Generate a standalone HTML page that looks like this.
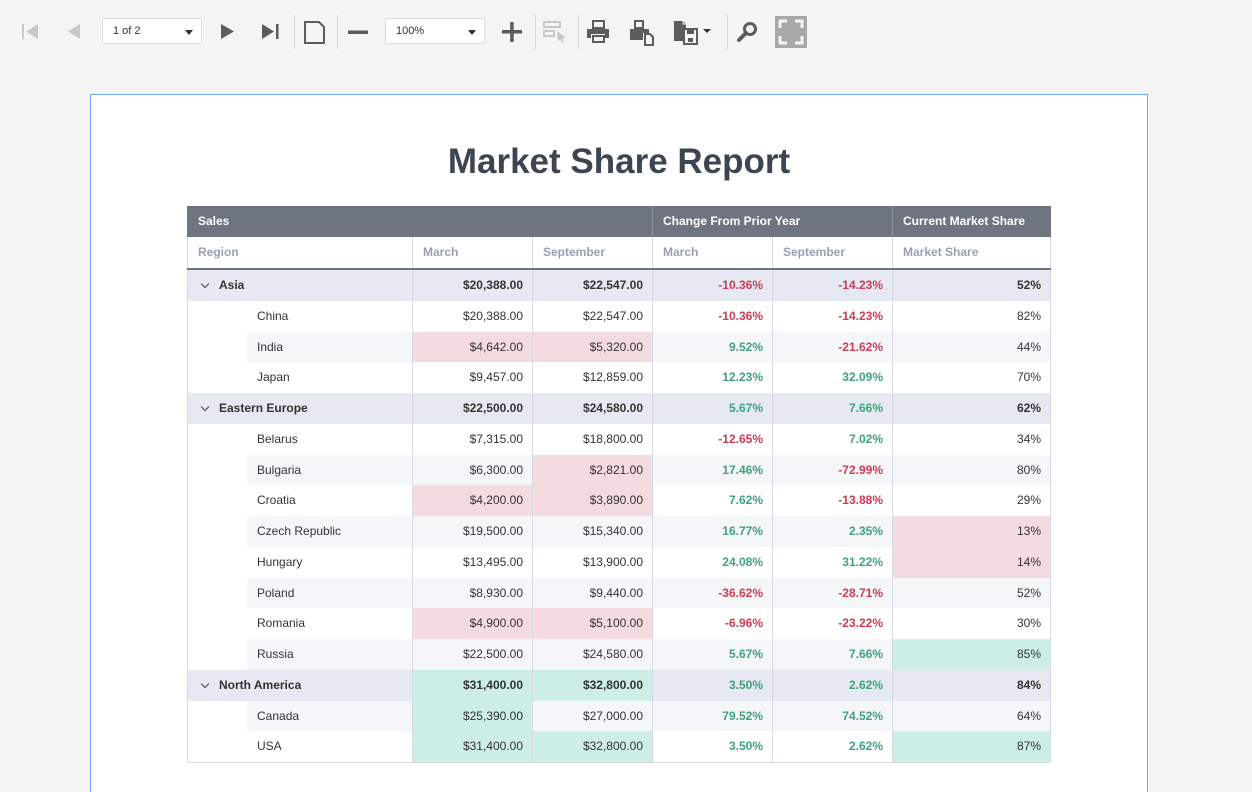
<!DOCTYPE html>
<html style="overflow:hidden"><head><meta charset="utf-8"><style>
body{margin:0;width:1252px;height:792px;background:#f4f4f4;font-family:"Liberation Sans",Arial,sans-serif;overflow:hidden;position:relative}
.ic{position:absolute}
.sel{position:absolute;top:18px;height:26px;background:#fff;border:1px solid #dcdcdc;border-radius:3px;box-sizing:border-box;font-size:11px;color:#333;line-height:24px;padding-left:10px}
.sel:after{content:"";position:absolute;right:8px;top:11px;border:4px solid transparent;border-top:5px solid #333}
.sep{position:absolute;top:15px;width:1px;height:34px;background:#dadada}
.page{position:absolute;left:90px;top:94px;width:1056px;height:710px;background:#fff;border:1px solid #6ea8f2}
h1{position:absolute;left:90px;width:1058px;top:142px;margin:0;text-align:center;font-size:35px;font-weight:bold;color:#3e4552}
.tbl{position:absolute;left:187px;top:206px;width:864px}
.r{display:flex;height:30.75px;font-size:12px;color:#333}
.c{box-sizing:border-box;border-left:1px solid #d6dae2;text-align:right;padding-right:9px;line-height:30.75px;white-space:nowrap}
.c:first-child{text-align:left}
.w0{width:225px}.w1{width:120px}.w2{width:120px}.w3{width:120px}.w4{width:120px}.w5{width:159px;border-right:1px solid #d6dae2}
.hd{height:31px;background:#6e7480;color:#fff;font-weight:bold}
.hd .c{border-left:1px solid #6e7480;line-height:31px;text-align:left;padding-left:10px}
.hd .c+.c{border-left:1px solid #8d929c}
.sh{height:31px;border-bottom:2px solid #6e7480;color:#98a0b2;font-weight:bold}
.sh .c{text-align:left;padding-left:10px;line-height:31px}
.g{background:#e6e9f1;font-weight:bold}
.g .c:first-child{padding-left:31px;position:relative}
.g .c:first-child:before{content:"";position:absolute;left:14px;top:11px;width:5px;height:5px;border-right:1.5px solid #444;border-bottom:1.5px solid #444;transform:rotate(45deg)}
.k .c:first-child{padding-left:69px;background:linear-gradient(90deg,#fff 59px,transparent 59px)}
.alt{background:#f5f6f8}
.p{background:#f4dbdf}.m{background:#cdeee5}
.rd{color:#d13a55;font-weight:bold}.gn{color:#3ea27f;font-weight:bold}
.last{border-bottom:1px solid #d6dae2}
</style></head><body>
<svg class="ic" style="left:20px;top:22px" width="22" height="20"><rect x="2" y="2" width="2" height="15" fill="#c8c8c8"/><path d="M18 2V17L6 9.5Z" fill="#c8c8c8"/></svg>
<svg class="ic" style="left:64px;top:22px" width="20" height="20"><path d="M16 2V17L4 9.5Z" fill="#c8c8c8"/></svg>
<div class="sel" style="left:102px;width:100px">1 of 2</div>
<svg class="ic" style="left:218px;top:22px" width="20" height="20"><path d="M3 2V17L16 9.5Z" fill="#5c5c5c"/></svg>
<svg class="ic" style="left:260px;top:22px" width="22" height="20"><path d="M2 2V17L14 9.5Z" fill="#5c5c5c"/><rect x="16" y="2" width="2.5" height="15" fill="#5c5c5c"/></svg>
<div class="sep" style="left:294px"></div>
<svg class="ic" style="left:303px;top:20px" width="24" height="26"><path d="M2 2H16L21 7V23H2Z" fill="none" stroke="#5c5c5c" stroke-width="2"/></svg>
<div class="sep" style="left:337px"></div>
<svg class="ic" style="left:346px;top:22px" width="24" height="20"><rect x="2" y="8.5" width="20" height="3.5" fill="#5c5c5c"/></svg>
<div class="sel" style="left:385px;width:100px">100%</div>
<svg class="ic" style="left:501px;top:21px" width="22" height="22"><rect x="1" y="9" width="20" height="3.5" fill="#5c5c5c"/><rect x="9.2" y="1" width="3.5" height="20" fill="#5c5c5c"/></svg>
<div class="sep" style="left:535px"></div>
<svg class="ic" style="left:542px;top:20px" width="28" height="24"><rect x="2" y="2" width="16" height="5" fill="none" stroke="#c8c8c8" stroke-width="2"/><rect x="2" y="11" width="10" height="5" fill="none" stroke="#c8c8c8" stroke-width="2"/><path d="M15 11L24 18L20 18.5L22 22L20.5 23L18.5 19.5L16 21Z" fill="#c8c8c8"/></svg>
<div class="sep" style="left:578px"></div>
<svg class="ic" style="left:586px;top:19px" width="26" height="26"><rect x="7" y="2" width="11" height="7" fill="none" stroke="#5c5c5c" stroke-width="2"/><path d="M1 10H23V19H19V15H5V19H1Z" fill="#5c5c5c"/><rect x="7" y="17" width="11" height="6" fill="none" stroke="#5c5c5c" stroke-width="2"/></svg>
<svg class="ic" style="left:629px;top:19px" width="28" height="28"><rect x="6" y="2" width="8" height="7" fill="none" stroke="#5c5c5c" stroke-width="2"/><path d="M1 10H20V14H14V21H1Z" fill="#5c5c5c"/><path d="M16 15H21L24 18V26H16Z" fill="none" stroke="#5c5c5c" stroke-width="2"/></svg>
<svg class="ic" style="left:672px;top:19px" width="44" height="28"><path d="M2 2H11L14 5V22H2Z" fill="#5c5c5c"/><path d="M11 2V5H14" fill="none" stroke="#f4f4f4" stroke-width="1"/><rect x="12" y="10" width="13" height="15" fill="#f4f4f4" stroke="#5c5c5c" stroke-width="2"/><rect x="15" y="10" width="7" height="5" fill="#5c5c5c"/><rect x="16" y="19" width="5" height="4" fill="#5c5c5c"/><path d="M31 10H39L35 14Z" fill="#333"/></svg>
<div class="sep" style="left:727px"></div>
<svg class="ic" style="left:736px;top:20px" width="24" height="24"><circle cx="14" cy="9" r="5.5" fill="none" stroke="#5c5c5c" stroke-width="3"/><path d="M10 13L3 20" stroke="#5c5c5c" stroke-width="4" stroke-linecap="round"/></svg>
<svg class="ic" style="left:775px;top:16px" width="32" height="32"><rect width="32" height="32" fill="#a8a8a8"/><path d="M5 12V5H12M20 5H27V12M27 20V27H20M12 27H5V20" fill="none" stroke="#f4f4f4" stroke-width="3"/></svg>

<div class="page"></div>
<h1>Market Share Report</h1>
<div class="tbl">
<div class="r hd"><div class="c" style="width:465px">Sales</div><div class="c" style="width:240px">Change From Prior Year</div><div class="c" style="width:159px">Current Market Share</div></div>
<div class="r sh"><div class="c w0">Region</div><div class="c w1">March</div><div class="c w2">September</div><div class="c w3">March</div><div class="c w4">September</div><div class="c w5">Market Share</div></div>

<div class="r g"><div class="c w0">Asia</div><div class="c w1">$20,388.00</div><div class="c w2">$22,547.00</div><div class="c w3 rd">-10.36%</div><div class="c w4 rd">-14.23%</div><div class="c w5">52%</div></div>
<div class="r k"><div class="c w0">China</div><div class="c w1">$20,388.00</div><div class="c w2">$22,547.00</div><div class="c w3 rd">-10.36%</div><div class="c w4 rd">-14.23%</div><div class="c w5">82%</div></div>
<div class="r k alt"><div class="c w0">India</div><div class="c w1 p">$4,642.00</div><div class="c w2 p">$5,320.00</div><div class="c w3 gn">9.52%</div><div class="c w4 rd">-21.62%</div><div class="c w5">44%</div></div>
<div class="r k"><div class="c w0">Japan</div><div class="c w1">$9,457.00</div><div class="c w2">$12,859.00</div><div class="c w3 gn">12.23%</div><div class="c w4 gn">32.09%</div><div class="c w5">70%</div></div>
<div class="r g"><div class="c w0">Eastern Europe</div><div class="c w1">$22,500.00</div><div class="c w2">$24,580.00</div><div class="c w3 gn">5.67%</div><div class="c w4 gn">7.66%</div><div class="c w5">62%</div></div>
<div class="r k"><div class="c w0">Belarus</div><div class="c w1">$7,315.00</div><div class="c w2">$18,800.00</div><div class="c w3 rd">-12.65%</div><div class="c w4 gn">7.02%</div><div class="c w5">34%</div></div>
<div class="r k alt"><div class="c w0">Bulgaria</div><div class="c w1">$6,300.00</div><div class="c w2 p">$2,821.00</div><div class="c w3 gn">17.46%</div><div class="c w4 rd">-72.99%</div><div class="c w5">80%</div></div>
<div class="r k"><div class="c w0">Croatia</div><div class="c w1 p">$4,200.00</div><div class="c w2 p">$3,890.00</div><div class="c w3 gn">7.62%</div><div class="c w4 rd">-13.88%</div><div class="c w5">29%</div></div>
<div class="r k alt"><div class="c w0">Czech Republic</div><div class="c w1">$19,500.00</div><div class="c w2">$15,340.00</div><div class="c w3 gn">16.77%</div><div class="c w4 gn">2.35%</div><div class="c w5 p">13%</div></div>
<div class="r k"><div class="c w0">Hungary</div><div class="c w1">$13,495.00</div><div class="c w2">$13,900.00</div><div class="c w3 gn">24.08%</div><div class="c w4 gn">31.22%</div><div class="c w5 p">14%</div></div>
<div class="r k alt"><div class="c w0">Poland</div><div class="c w1">$8,930.00</div><div class="c w2">$9,440.00</div><div class="c w3 rd">-36.62%</div><div class="c w4 rd">-28.71%</div><div class="c w5">52%</div></div>
<div class="r k"><div class="c w0">Romania</div><div class="c w1 p">$4,900.00</div><div class="c w2 p">$5,100.00</div><div class="c w3 rd">-6.96%</div><div class="c w4 rd">-23.22%</div><div class="c w5">30%</div></div>
<div class="r k alt"><div class="c w0">Russia</div><div class="c w1">$22,500.00</div><div class="c w2">$24,580.00</div><div class="c w3 gn">5.67%</div><div class="c w4 gn">7.66%</div><div class="c w5 m">85%</div></div>
<div class="r g"><div class="c w0">North America</div><div class="c w1 m">$31,400.00</div><div class="c w2 m">$32,800.00</div><div class="c w3 gn">3.50%</div><div class="c w4 gn">2.62%</div><div class="c w5">84%</div></div>
<div class="r k alt"><div class="c w0">Canada</div><div class="c w1 m">$25,390.00</div><div class="c w2">$27,000.00</div><div class="c w3 gn">79.52%</div><div class="c w4 gn">74.52%</div><div class="c w5">64%</div></div>
<div class="r k last"><div class="c w0">USA</div><div class="c w1 m">$31,400.00</div><div class="c w2 m">$32,800.00</div><div class="c w3 gn">3.50%</div><div class="c w4 gn">2.62%</div><div class="c w5 m">87%</div></div>
</div>
</body></html>
